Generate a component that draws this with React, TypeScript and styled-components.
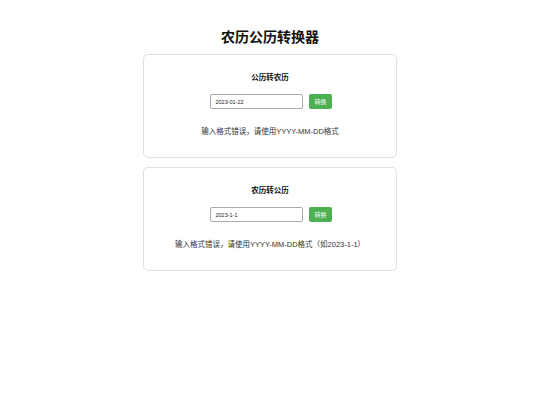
import styled, { createGlobalStyle } from "styled-components";

const GlobalStyle = createGlobalStyle`
  body {
    margin: 0;
    background: #fff;
    font-family: "Liberation Sans", Arial, "Noto Sans CJK SC", sans-serif;
    color: #333;
  }
`;

const Page = styled.div`
  padding-top: 27px;
  display: flex;
  flex-direction: column;
  align-items: center;
`;

const Title = styled.h1`
  margin: 0 0 6px;
  font-size: 14px;
  line-height: 21px;
  font-weight: bold;
  color: #111;
  text-align: center;
`;

const Card = styled.section`
  width: 254px;
  box-sizing: border-box;
  border: 1px solid #e0e0e0;
  border-radius: 5px;
  padding: 0 10px;
  margin-bottom: 9px;
  text-align: center;
  background: #fff;
`;

const CardTitle = styled.h2`
  margin: 17px 0 10px;
  font-size: 7.5px;
  line-height: 12px;
  font-weight: bold;
  color: #111;
`;

const Row = styled.div`
  display: flex;
  justify-content: center;
  gap: 6px;
  padding-left: 2px;
`;

const DateInput = styled.input`
  width: 93px;
  height: 15px;
  box-sizing: border-box;
  border: 1px solid #aaa;
  border-radius: 2px;
  padding: 0 4px;
  font-family: "Liberation Sans", Arial, sans-serif;
  font-size: 5.5px;
  color: #222;
  outline: none;
`;

const Button = styled.button`
  height: 15px;
  box-sizing: border-box;
  padding: 0 5px;
  border: none;
  border-radius: 2px;
  background: #4caf50;
  color: #fff;
  font-family: "Noto Sans CJK SC", sans-serif;
  font-size: 6px;
  cursor: pointer;
`;

const Message = styled.p`
  margin: 16.5px 0 19.5px;
  font-size: 7.5px;
  line-height: 12px;
  color: #333;
`;

interface ConverterProps {
  title: string;
  value: string;
  message: string;
}

function Converter({ title, value, message }: ConverterProps) {
  return (
    <Card>
      <CardTitle>{title}</CardTitle>
      <Row>
        <DateInput type="text" defaultValue={value} />
        <Button>转换</Button>
      </Row>
      <Message>{message}</Message>
    </Card>
  );
}

function App() {
  return (
    <>
      <GlobalStyle />
      <Page>
        <Title>农历公历转换器</Title>
        <Converter
          title="公历转农历"
          value="2023-01-22"
          message="输入格式错误，请使用YYYY-MM-DD格式"
        />
        <Converter
          title="农历转公历"
          value="2023-1-1"
          message="输入格式错误，请使用YYYY-MM-DD格式（如2023-1-1）"
        />
      </Page>
    </>
  );
}

export default App;
